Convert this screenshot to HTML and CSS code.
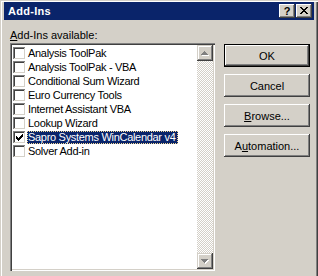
FILE: index.html
```html
<!DOCTYPE html>
<html lang="en">

<head>
    <meta charset="UTF-8">
    <meta name="viewport" content="width=device-width, initial-scale=1.0">
    <title>Add-Ins</title>
    <link rel="stylesheet" href="styles.css">
</head>

<body>
    <div class="window">
        <div class="titlebar">
            <span class="title">Add-Ins</span>
            <div class="caption-buttons">
                <button class="cap-btn help">?</button>
                <button class="cap-btn close">
                    <svg width="16" height="14" viewBox="0 0 16 14" shape-rendering="crispEdges">
                        <g fill="#000">
                            <rect x="4" y="3" width="2" height="1" />
                            <rect x="10" y="3" width="2" height="1" />
                            <rect x="5" y="4" width="2" height="1" />
                            <rect x="9" y="4" width="2" height="1" />
                            <rect x="6" y="5" width="4" height="1" />
                            <rect x="7" y="6" width="2" height="1" />
                            <rect x="6" y="7" width="4" height="1" />
                            <rect x="5" y="8" width="2" height="1" />
                            <rect x="9" y="8" width="2" height="1" />
                            <rect x="4" y="9" width="2" height="1" />
                            <rect x="10" y="9" width="2" height="1" />
                        </g>
                    </svg>
                </button>
            </div>
        </div>

        <div class="dialog">
            <div class="left">
                <label class="list-label"><u>A</u>dd-Ins available:</label>
                <div class="listbox">
                    <ul class="items">
                        <li class="item"><span class="check"></span><span class="name">Analysis ToolPak</span></li>
                        <li class="item"><span class="check"></span><span class="name">Analysis ToolPak - VBA</span></li>
                        <li class="item"><span class="check"></span><span class="name">Conditional Sum Wizard</span></li>
                        <li class="item"><span class="check"></span><span class="name">Euro Currency Tools</span></li>
                        <li class="item"><span class="check"></span><span class="name">Internet Assistant VBA</span></li>
                        <li class="item"><span class="check"></span><span class="name">Lookup Wizard</span></li>
                        <li class="item">
                            <span class="check">
                                <svg width="13" height="13" viewBox="0 0 13 13" shape-rendering="crispEdges">
                                    <g fill="#000">
                                        <rect x="3" y="5" width="1" height="3" />
                                        <rect x="4" y="6" width="1" height="3" />
                                        <rect x="5" y="7" width="1" height="3" />
                                        <rect x="6" y="6" width="1" height="3" />
                                        <rect x="7" y="5" width="1" height="3" />
                                        <rect x="8" y="4" width="1" height="3" />
                                        <rect x="9" y="3" width="1" height="3" />
                                    </g>
                                </svg>
                            </span>
                            <span class="name selected">Sapro Systems WinCalendar v4</span>
                        </li>
                        <li class="item"><span class="check"></span><span class="name">Solver Add-in</span></li>
                    </ul>

                    <!-- scrollbar is disabled, every item fits -->
                    <div class="scrollbar">
                        <div class="sb-btn">
                            <svg width="16" height="16" viewBox="0 0 16 16" shape-rendering="crispEdges">
                                <g fill="#fff">
                                    <rect x="8" y="7" width="1" height="1" />
                                    <rect x="7" y="8" width="3" height="1" />
                                    <rect x="6" y="9" width="5" height="1" />
                                    <rect x="5" y="10" width="7" height="1" />
                                </g>
                                <g fill="#808080">
                                    <rect x="7" y="6" width="1" height="1" />
                                    <rect x="6" y="7" width="3" height="1" />
                                    <rect x="5" y="8" width="5" height="1" />
                                    <rect x="4" y="9" width="7" height="1" />
                                </g>
                            </svg>
                        </div>
                        <div class="sb-track"></div>
                        <div class="sb-btn">
                            <svg width="16" height="16" viewBox="0 0 16 16" shape-rendering="crispEdges">
                                <g fill="#fff">
                                    <rect x="5" y="7" width="7" height="1" />
                                    <rect x="6" y="8" width="5" height="1" />
                                    <rect x="7" y="9" width="3" height="1" />
                                    <rect x="8" y="10" width="1" height="1" />
                                </g>
                                <g fill="#808080">
                                    <rect x="4" y="6" width="7" height="1" />
                                    <rect x="5" y="7" width="5" height="1" />
                                    <rect x="6" y="8" width="3" height="1" />
                                    <rect x="7" y="9" width="1" height="1" />
                                </g>
                            </svg>
                        </div>
                    </div>
                </div>
            </div>

            <div class="buttons">
                <button class="btn default">OK</button>
                <button class="btn">Cancel</button>
                <button class="btn"><u>B</u>rowse...</button>
                <button class="btn">A<u>u</u>tomation...</button>
            </div>
        </div>
    </div>
</body>

</html>
```

FILE: styles.css
```css
/* styles.css */
body {
    margin: 0;
    overflow: hidden;
    font-family: "Liberation Sans", Arial, sans-serif;
    font-size: 11px;
}

/* window is cut off at the bottom, so no bottom edge */
.window {
    width: 318px;
    height: 276px;
    box-sizing: border-box;
    padding: 2px 4px 0 4px;
    background-color: #d4d0c8;
    box-shadow: inset 1px 1px #d4d0c8, inset 2px 2px #fff,
        inset -1px 0 #404040, inset -2px 0 #808080;
}

.titlebar {
    display: flex;
    align-items: center;
    height: 18px;
    padding: 0 2px;
    background-color: #0a246a;
}

.title {
    padding-left: 2px;
    color: #fff;
    font-weight: bold;
    letter-spacing: 0.3px;
}

.caption-buttons {
    display: flex;
    gap: 1px;
    margin-left: auto;
}

.cap-btn {
    width: 16px;
    height: 14px;
    padding: 0;
    border: none;
    background-color: #d4d0c8;
    box-shadow: inset -1px -1px #404040, inset 1px 1px #fff,
        inset -2px -2px #808080;
    display: flex;
    align-items: center;
    justify-content: center;
}

.cap-btn.help {
    font-family: "Liberation Sans", Arial, sans-serif;
    font-size: 11px;
    font-weight: bold;
    color: #000;
    line-height: 14px;
}

.dialog {
    display: flex;
    padding: 9px 0 0 6px;
}

.left {
    width: 205px;
}

.list-label {
    display: block;
    height: 13px;
    line-height: 13px;
    margin-bottom: 1px;
}

.listbox {
    display: flex;
    height: 228px;
    box-sizing: border-box;
    padding: 2px;
    background-color: #fff;
    box-shadow: inset 1px 1px #808080, inset 2px 2px #404040,
        inset -1px -1px #fff, inset -2px -2px #d4d0c8;
}

.items {
    flex: 1;
    margin: 0;
    padding: 2px 0 0 1px;
    list-style: none;
}

.item {
    display: flex;
    align-items: flex-start;
    height: 14px;
}

.check {
    width: 13px;
    height: 13px;
    flex-shrink: 0;
    background-color: #fff;
    box-shadow: inset -1px -1px #fff, inset 1px 1px #808080,
        inset -2px -2px #d4d0c8, inset 2px 2px #404040;
}

.check svg {
    display: block;
}

.name {
    height: 13px;
    line-height: 13px;
    margin-left: 1px;
    padding: 0 2px 0 1px;
    letter-spacing: -0.3px;
    white-space: nowrap;
}

.name.selected {
    background-color: #0a246a;
    color: #fff;
    outline: 1px dotted #f5db95;
    outline-offset: -1px;
}

.scrollbar {
    display: flex;
    flex-direction: column;
    width: 16px;
}

.sb-btn {
    width: 16px;
    height: 16px;
    background-color: #d4d0c8;
    box-shadow: inset -1px -1px #404040, inset 1px 1px #d4d0c8,
        inset -2px -2px #808080, inset 2px 2px #fff;
}

.sb-btn svg {
    display: block;
}

.sb-track {
    flex: 1;
    background-color: #fff;
    background-image: repeating-conic-gradient(#d4d0c8 0 25%, #fff 0 50%);
    background-size: 2px 2px;
}

.buttons {
    display: flex;
    flex-direction: column;
    gap: 7px;
    margin: 15px 0 0 9px;
}

.btn {
    width: 86px;
    height: 23px;
    padding: 0;
    border: none;
    background-color: #d4d0c8;
    color: #000;
    font-family: "Liberation Sans", Arial, sans-serif;
    font-size: 11px;
    box-shadow: inset -1px -1px #404040, inset 1px 1px #fff,
        inset -2px -2px #808080;
}

.btn.default {
    border: 1px solid #000;
}
```
